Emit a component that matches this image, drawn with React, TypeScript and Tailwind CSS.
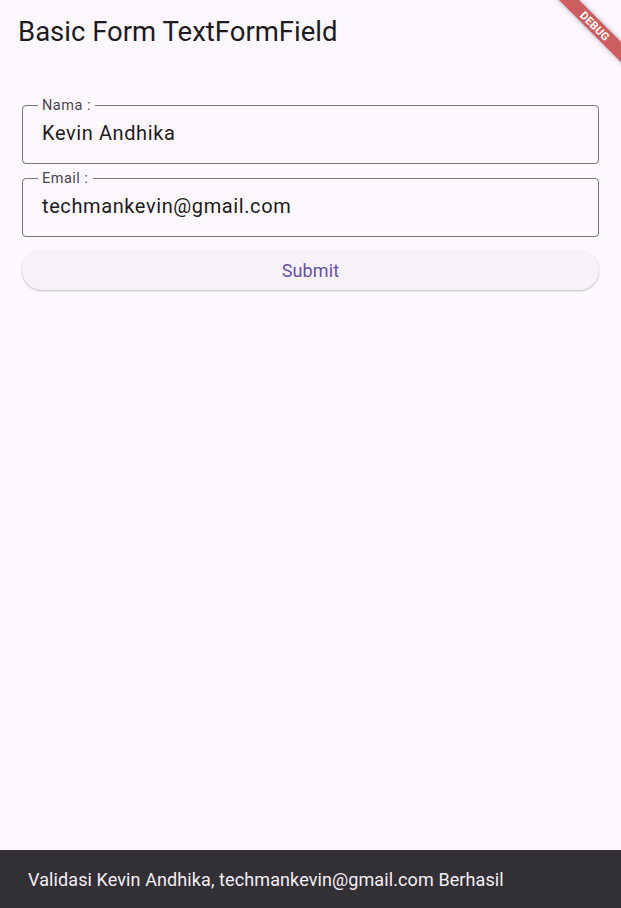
import React from "react";

const fields = [
  { id: "nama", label: "Nama :", value: "Kevin Andhika" },
  { id: "email", label: "Email :", value: "techmankevin@gmail.com" },
];

const OutlinedField = ({ label, value }: { label: string; value: string }) => {
  return (
    <div className="relative h-[59px] rounded-[4px] border border-[#79747E]">
      <span className="absolute left-[15px] top-[-9px] bg-[#FEF7FF] px-[4px] text-[14.5px] leading-[18px] tracking-[0.5px] text-[#49454F]">
        {label}
      </span>
      <div className="flex h-full items-center pb-[3px] pl-[19px] text-[20px] tracking-[0.6px] text-[#1D1B20]">
        {value}
      </div>
    </div>
  );
};

const DebugBanner = () => (
  <div className="pointer-events-none absolute right-[-24px] top-[19px] flex h-[14px] w-[100px] rotate-45 items-center justify-center bg-[rgba(183,28,28,0.7)] shadow-[0_0_5px_rgba(0,0,0,0.35)]">
    <span className="text-[11px] font-bold leading-none tracking-[0.3px] text-white">DEBUG</span>
  </div>
);

export default function App() {
  return (
    <div
      className="relative flex min-h-[908px] w-full flex-col overflow-hidden bg-[#FEF7FF]"
      style={{ fontFamily: "Roboto, 'Liberation Sans', sans-serif" }}
    >
      <header className="flex h-16 items-center px-[18px]">
        <h1 className="text-[27.5px] font-normal text-[#1D1B20]">Basic Form TextFormField</h1>
      </header>

      <main className="flex flex-1 flex-col gap-[14px] px-[22px] pt-[41px]">
        {fields.map(({ id, label, value }) => (
          <OutlinedField key={id} label={label} value={value} />
        ))}
        <button className="mt-[-1px] h-[40px] w-full rounded-full bg-[#F7F2FA] text-[18px] tracking-[0.1px] text-[#6750A4] shadow-[0_1px_2px_rgba(0,0,0,0.25)]">
          Submit
        </button>
      </main>

      <div className="flex h-[58px] items-center bg-[#322F35] px-[28px]">
        <span className="text-[18px] tracking-[0.1px] text-[#F5EFF7]">
          Validasi Kevin Andhika, techmankevin@gmail.com Berhasil
        </span>
      </div>

      <DebugBanner />
    </div>
  );
}
